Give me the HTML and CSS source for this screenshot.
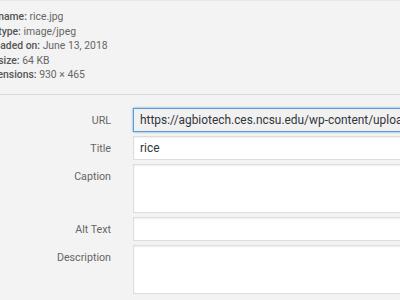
FILE: index.html
```html
<!DOCTYPE html>
<html lang="en">
<head>
  <meta charset="UTF-8" />
  <title>Attachment Details</title>
  <link rel="stylesheet" href="styles.css">
</head>
<body>
  <div class="attachment-info">
    <div class="details">
      <div class="detail"><strong>File name:</strong> rice.jpg</div>
      <div class="detail"><strong>File type:</strong> image/jpeg</div>
      <div class="detail"><strong>Uploaded on:</strong> June 13, 2018</div>
      <div class="detail"><strong>File size:</strong> 64 KB</div>
      <div class="detail"><strong>Dimensions:</strong> 930 &times; 465</div>
    </div>
  </div>

  <div class="settings">
    <label class="setting">
      <span class="name">URL</span>
      <input type="text" class="field is-url" value="https://agbiotech.ces.ncsu.edu/wp-content/uploads/2018/06/rice.jpg" readonly>
    </label>
    <label class="setting">
      <span class="name">Title</span>
      <input type="text" class="field" value="rice">
    </label>
    <label class="setting">
      <span class="name">Caption</span>
      <textarea class="field area"></textarea>
    </label>
    <label class="setting">
      <span class="name">Alt Text</span>
      <input type="text" class="field" value="">
    </label>
    <label class="setting">
      <span class="name">Description</span>
      <textarea class="field area"></textarea>
    </label>
  </div>
</body>
</html>
```

FILE: styles.css
```css
* { margin: 0; padding: 0; box-sizing: border-box; }

html, body {
  overflow: hidden;
  height: 100%;
  background: #f3f3f3;
  font-family: Roboto, "Liberation Sans", sans-serif;
  color: #666;
}

.attachment-info {
  padding: 9px 0 11px;
  border-top: 1px solid #e8e8e8;
  border-bottom: 1px solid #dcdcdc;
}

/* left edge of the sidebar is cropped off */
.details { margin-left: -21px; font-size: 10.4px; line-height: 14.5px; }
.details strong { font-weight: 500; color: #555; }

.settings {
  padding-top: 13px;
  display: flex; flex-direction: column; gap: 4px;
}

.setting {
  display: grid;
  grid-template-columns: 111px 320px;
  column-gap: 22px;
}

.setting .name {
  text-align: right;
  font-size: 10.7px;
  line-height: 12px;
  padding-top: 7px;
  color: #666;
}

.field {
  display: block;
  width: 100%;
  height: 24px;
  border: 1px solid #ddd;
  box-shadow: inset 0 1px 2px rgba(0,0,0,0.07);
  background: #fff;
  padding: 0 6px;
  font-family: inherit;
  font-size: 11.9px;
  color: #32373c;
  outline: none;
}

.field.area { height: 49px; resize: none; }

.field.is-url {
  background: #f1f1f1;
  border-color: #5b9dd9;
  box-shadow: 0 0 2px rgba(30,140,190,0.8);
}
```
